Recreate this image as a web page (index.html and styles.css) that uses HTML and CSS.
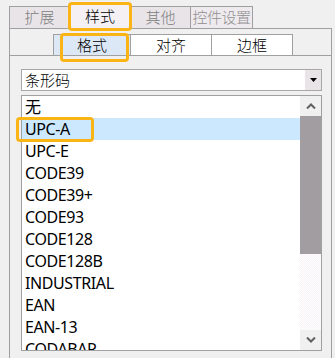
FILE: index.html
```html
<!DOCTYPE html>
<html lang="zh">
<head>
    <meta charset="UTF-8">
    <title>样式</title>
    <link rel="stylesheet" href="styles.css">
</head>
<body>
    <div class="tabbar">
        <div class="tab">扩展</div>
        <div class="tab active hl hl-tab">样式</div>
        <div class="tab">其他</div>
        <div class="tab tab-last">控件设置</div>
    </div>

    <div class="panel">
        <div class="subtabs">
            <div class="subtab active hl hl-sub">格式</div>
            <div class="subtab">对齐</div>
            <div class="subtab">边框</div>
        </div>

        <div class="panel-body">
            <div class="combo">
                <span class="combo-text">条形码</span>
                <span class="combo-btn">
                    <svg width="7" height="4" viewBox="0 0 7 4"><path d="M0 0H7L3.5 4Z" fill="#000"/></svg>
                </span>
            </div>

            <div class="listbox">
                <ul class="items">
                    <li>无</li>
                    <li class="selected hl hl-row">UPC-A</li>
                    <li>UPC-E</li>
                    <li>CODE39</li>
                    <li>CODE39+</li>
                    <li>CODE93</li>
                    <li>CODE128</li>
                    <li>CODE128B</li>
                    <li>INDUSTRIAL</li>
                    <li>EAN</li>
                    <li>EAN-13</li>
                    <li>CODABAR</li>
                </ul>
                <div class="scrollbar">
                    <div class="sb-btn">
                        <svg width="10" height="6" viewBox="0 0 10 6"><path d="M1 5.5L5 1.5L9 5.5" fill="none" stroke="#606060" stroke-width="2"/></svg>
                    </div>
                    <div class="sb-thumb"></div>
                    <div class="sb-track"></div>
                    <div class="sb-btn">
                        <svg width="10" height="6" viewBox="0 0 10 6"><path d="M1 0.5L5 4.5L9 0.5" fill="none" stroke="#606060" stroke-width="2"/></svg>
                    </div>
                </div>
            </div>
        </div>
    </div>
</body>
</html>
```

FILE: styles.css
```css
* {
    box-sizing: border-box;
    margin: 0;
    padding: 0;
}
body {
    background-color: #f0f0f0;
    font-family: "Noto Sans CJK SC", "Noto Sans", sans-serif;
    font-size: 15px;
    font-weight: 300;
    color: #000;
    overflow: hidden;
}

/* top tabs */
.tabbar {
    display: flex;
    align-items: flex-end;
    height: 28px;
    padding-left: 9px;
}
.tab {
    height: 22px;
    width: 61px;
    line-height: 20px;
    text-align: center;
    color: #808080;
    background-color: #e8e4e8;
    border: 1px solid #a0a0a0;
    border-bottom: none;
}
.tab + .tab {
    margin-left: -1px;
}
.tab.active {
    position: relative;
    z-index: 2;
    height: 26px;
    width: 62px;
    line-height: 24px;
    margin-bottom: -1px;
    color: #000;
    background-color: #f4f0f4;
}
.tab-last {
    width: 63px;
    color: #909090;
    background-color: #eeeaee;
    letter-spacing: -0.5px;
}

.panel {
    width: 323px;
    height: 340px;
    margin-left: 9px;
    border: 1px solid #a0a0a0;
    border-bottom: none;
}

/* inner tabs */
.subtabs {
    display: flex;
    padding: 5px 0 0 43px;
    border-bottom: 1px solid #a0a0a0;
}
.subtab {
    width: 82px;
    height: 21px;
    line-height: 19px;
    text-align: center;
    background-color: #fff;
    border: 1px solid #a0a0a0;
    border-bottom: none;
    margin-left: -1px;
}
.subtab.active {
    width: 78px;
    margin-left: 0;
    background-color: #dce8f6;
}

.panel-body {
    padding: 13px 9px 0 11px;
}

/* combobox */
.combo {
    display: flex;
    height: 22px;
    background-color: #fff;
    border: 1px solid #a8a8a8;
}
.combo-text {
    flex: 1;
    padding-left: 3px;
    line-height: 20px;
}
.combo-btn {
    width: 16px;
    display: flex;
    justify-content: center;
    align-items: center;
    background-color: #e8e4e8;
}

/* list */
.listbox {
    display: flex;
    height: 256px;
    margin-top: 4px;
    background-color: #fff;
    border: 1px solid #a0a0a0;
}
.items {
    flex: 1;
    list-style: none;
    overflow-x: visible;
    overflow-y: clip;
    font-family: "Noto Sans", "Noto Sans CJK SC", sans-serif;
    font-size: 16px;
    font-weight: 400;
    letter-spacing: -0.4px;
}
.items li {
    height: 22px;
    line-height: 22px;
    padding-left: 3px;
    white-space: nowrap;
}
.items li.selected {
    background-color: #cce8ff;
}

.scrollbar {
    width: 21px;
    display: flex;
    flex-direction: column;
}
.sb-btn {
    height: 20px;
    display: flex;
    justify-content: center;
    align-items: center;
    background-color: #f0f0f0;
}
.sb-thumb {
    height: 138px;
    background-color: #a19da1;
}
.sb-track {
    flex: 1;
    background: repeating-conic-gradient(#f6f2f6 0 25%, #fff 0 50%) 0 0 / 2px 2px;
}

/* orange callout boxes */
.hl {
    position: relative;
}
.hl::after {
    content: "";
    position: absolute;
    border: 3px solid #fbb416;
    border-radius: 4px;
    pointer-events: none;
}
.hl-tab::after {
    top: -2px;
    left: -2px;
    right: -2px;
    bottom: -2px;
}
.hl-sub::after {
    top: -2px;
    left: 6px;
    right: 1px;
    bottom: -7px;
    z-index: 3;
}
.hl-row::after {
    top: -1px;
    bottom: -2px;
    left: -6px;
    width: 72px;
}
```
